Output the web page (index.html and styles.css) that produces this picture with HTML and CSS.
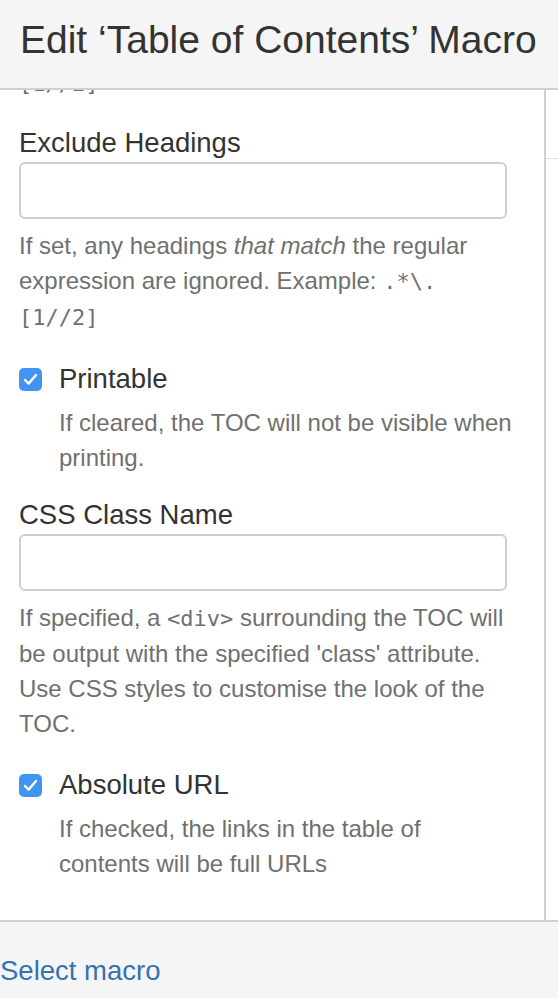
FILE: index.html
```html
<!DOCTYPE html>
<html>
  <head>
    <meta charset="utf-8">
    <title>Edit 'Table of Contents' Macro</title>
    <link rel="stylesheet" href="styles.css">
  </head>
  <body>
    <div class="dialog">
      <header class="dialog-header">
        <h2 class="dialog-title">Edit ‘Table of Contents’ Macro</h2>
      </header>
      <div class="dialog-body">
        <div class="panel-main">
          <p class="desc desc-cut"><code>[1//2]</code></p>

          <div class="field">
            <label class="field-label" for="exclude">Exclude Headings</label>
            <input class="text" id="exclude" type="text">
            <p class="desc">If set, any headings <em>that match</em> the regular expression are ignored. Example: <code>.*\.<wbr>[1//2]</code></p>
          </div>

          <div class="field field-check">
            <label class="check">
              <span class="box">
                <svg width="15" height="13" viewBox="0 0 15 13"><path d="M2 7 L5.6 10.6 L13 2" fill="none" stroke="#fff" stroke-width="2.4" stroke-linecap="round" stroke-linejoin="round"/></svg>
              </span>
              Printable
            </label>
            <p class="desc desc-indent">If cleared, the TOC will not be visible when printing.</p>
          </div>

          <div class="field">
            <label class="field-label" for="cssclass">CSS Class Name</label>
            <input class="text" id="cssclass" type="text">
            <p class="desc">If specified, a <code>&lt;div&gt;</code> surrounding the TOC will be output with the specified 'class' attribute. Use CSS styles to customise the look of the TOC.</p>
          </div>

          <div class="field field-check">
            <label class="check">
              <span class="box">
                <svg width="15" height="13" viewBox="0 0 15 13"><path d="M2 7 L5.6 10.6 L13 2" fill="none" stroke="#fff" stroke-width="2.4" stroke-linecap="round" stroke-linejoin="round"/></svg>
              </span>
              Absolute URL
            </label>
            <p class="desc desc-indent">If checked, the links in the table of contents will be full URLs</p>
          </div>
        </div>
        <div class="panel-side">
          <div class="side-head"></div>
        </div>
      </div>
      <footer class="dialog-footer">
        <a class="select-link" href="#">Select macro</a>
      </footer>
    </div>
  </body>
</html>
```

FILE: styles.css
```css
body {
  margin: 0;
  font-family: "Liberation Sans", Arial, sans-serif;
  color: #333;
  background: #fff;
}

.dialog {
  display: flex;
  flex-direction: column;
  height: 998px;
  overflow: hidden;
}

.dialog-header {
  background: #f5f5f5;
  border-bottom: 2px solid #d0d0d0;
  height: 71px;
  padding: 17px 0 0 20px;
}

.dialog-title {
  margin: 0;
  font-size: 39px;
  font-weight: normal;
  line-height: 46px;
  white-space: nowrap;
}

.dialog-body {
  display: flex;
  flex: 1;
  min-height: 0;
}

.panel-main {
  width: 495px;
  padding: 0 30px 0 19px;
  border-right: 2px solid #d0d0d0;
  overflow: hidden;
}

.panel-side {
  flex: 1;
}

.side-head {
  height: 68px;
  border-bottom: 1px solid #e0e0e0;
}

.desc {
  margin: 9px 0 0;
  font-size: 24px;
  line-height: 35px;
  color: #707070;
}

.desc-cut {
  margin-top: -25px;
  margin-bottom: 25px;
}

.desc-indent {
  margin-left: 40px;
}

code {
  font-family: "DejaVu Sans Mono", "Liberation Mono", monospace;
  font-size: 22px;
}

.field {
  margin-top: 23px;
}

.field-check {
  margin-top: 27px;
}

.field-label {
  display: block;
  font-size: 27.5px;
  line-height: 34px;
  margin-bottom: 2px;
}

.text {
  display: block;
  box-sizing: border-box;
  width: 488px;
  height: 57px;
  margin: 0;
  border: 2px solid #cfcfcf;
  border-radius: 6px;
  background: #fff;
}

.check {
  display: flex;
  align-items: center;
  gap: 17px;
  font-size: 27.5px;
  line-height: 34px;
}

.box {
  display: flex;
  align-items: center;
  justify-content: center;
  width: 23px;
  height: 23px;
  border-radius: 5px;
  background: #4094f4;
}

.dialog-footer {
  background: #f5f5f5;
  border-top: 2px solid #d0d0d0;
  height: 44px;
  padding-top: 32px;
}

.select-link {
  font-size: 27.5px;
  line-height: 34px;
  color: #3572b0;
  text-decoration: none;
}
```
